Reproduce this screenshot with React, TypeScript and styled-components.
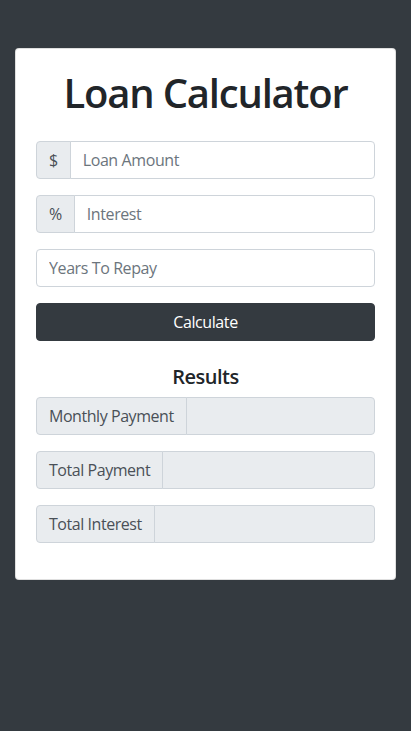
import React from "react";
import styled, { createGlobalStyle } from "styled-components";

const GlobalStyle = createGlobalStyle`
  html, body {
    margin: 0;
    padding: 0;
    background: #343a40;
    font-family: "Open Sans", "Noto Sans", sans-serif;
    color: #212529;
  }
  * {
    box-sizing: border-box;
  }
`;

const Page = styled.div`
  min-height: 731px;
  padding: 48px 15px 0;
`;

const Card = styled.div`
  background: #fff;
  border: 1px solid rgba(0, 0, 0, 0.125);
  border-radius: 4px;
  padding: 20px 20px 36px;
  text-align: center;
`;

const Title = styled.h1`
  margin: 0 0 24px;
  font-size: 40px;
  font-weight: 600;
  line-height: 48px;
  letter-spacing: -1.2px;
`;

const Form = styled.form`
  display: flex;
  flex-direction: column;
  gap: 16px;
`;

const InputGroup = styled.div`
  display: flex;
  height: 38px;
`;

const Addon = styled.span`
  display: flex;
  align-items: center;
  padding: 0 12px;
  font-size: 16px;
  letter-spacing: -0.45px;
  color: #495057;
  background: #e9ecef;
  border: 1px solid #ced4da;
  border-radius: 4px 0 0 4px;
  white-space: nowrap;
`;

const Input = styled.input<{ $attached?: boolean; $disabled?: boolean }>`
  flex: 1;
  min-width: 0;
  height: 38px;
  padding: 0 12px;
  font-family: inherit;
  font-size: 16px;
  letter-spacing: -0.4px;
  color: #495057;
  background: ${(p) => (p.$disabled ? "#e9ecef" : "#fff")};
  border: 1px solid #ced4da;
  border-radius: ${(p) => (p.$attached ? "0 4px 4px 0" : "4px")};
  margin-left: ${(p) => (p.$attached ? "-1px" : "0")};
  outline: none;

  &::placeholder {
    color: #6c757d;
    opacity: 1;
  }
`;

const Button = styled.button`
  height: 38px;
  border: 1px solid #343a40;
  border-radius: 4px;
  background: #343a40;
  color: #fff;
  font-family: inherit;
  font-size: 16px;
  letter-spacing: -0.4px;
`;

const Results = styled.div`
  margin-top: 24px;
  display: flex;
  flex-direction: column;
  gap: 16px;
`;

const ResultsTitle = styled.h5`
  margin: 0 0 -8px;
  font-size: 20px;
  font-weight: 600;
  line-height: 24px;
  letter-spacing: -0.5px;
`;

const results = ["Monthly Payment", "Total Payment", "Total Interest"];

export default function App() {
  return (
    <>
      <GlobalStyle />
      <Page>
        <Card>
          <Title>Loan Calculator</Title>
          <Form onSubmit={(e) => e.preventDefault()}>
            <InputGroup>
              <Addon>$</Addon>
              <Input $attached placeholder="Loan Amount" />
            </InputGroup>
            <InputGroup>
              <Addon>%</Addon>
              <Input $attached placeholder="Interest" />
            </InputGroup>
            <InputGroup>
              <Input placeholder="Years To Repay" />
            </InputGroup>
            <Button type="submit">Calculate</Button>
          </Form>
          <Results>
            <ResultsTitle>Results</ResultsTitle>
            {results.map((label) => (
              <InputGroup key={label}>
                <Addon>{label}</Addon>
                <Input $attached $disabled disabled />
              </InputGroup>
            ))}
          </Results>
        </Card>
      </Page>
    </>
  );
}
